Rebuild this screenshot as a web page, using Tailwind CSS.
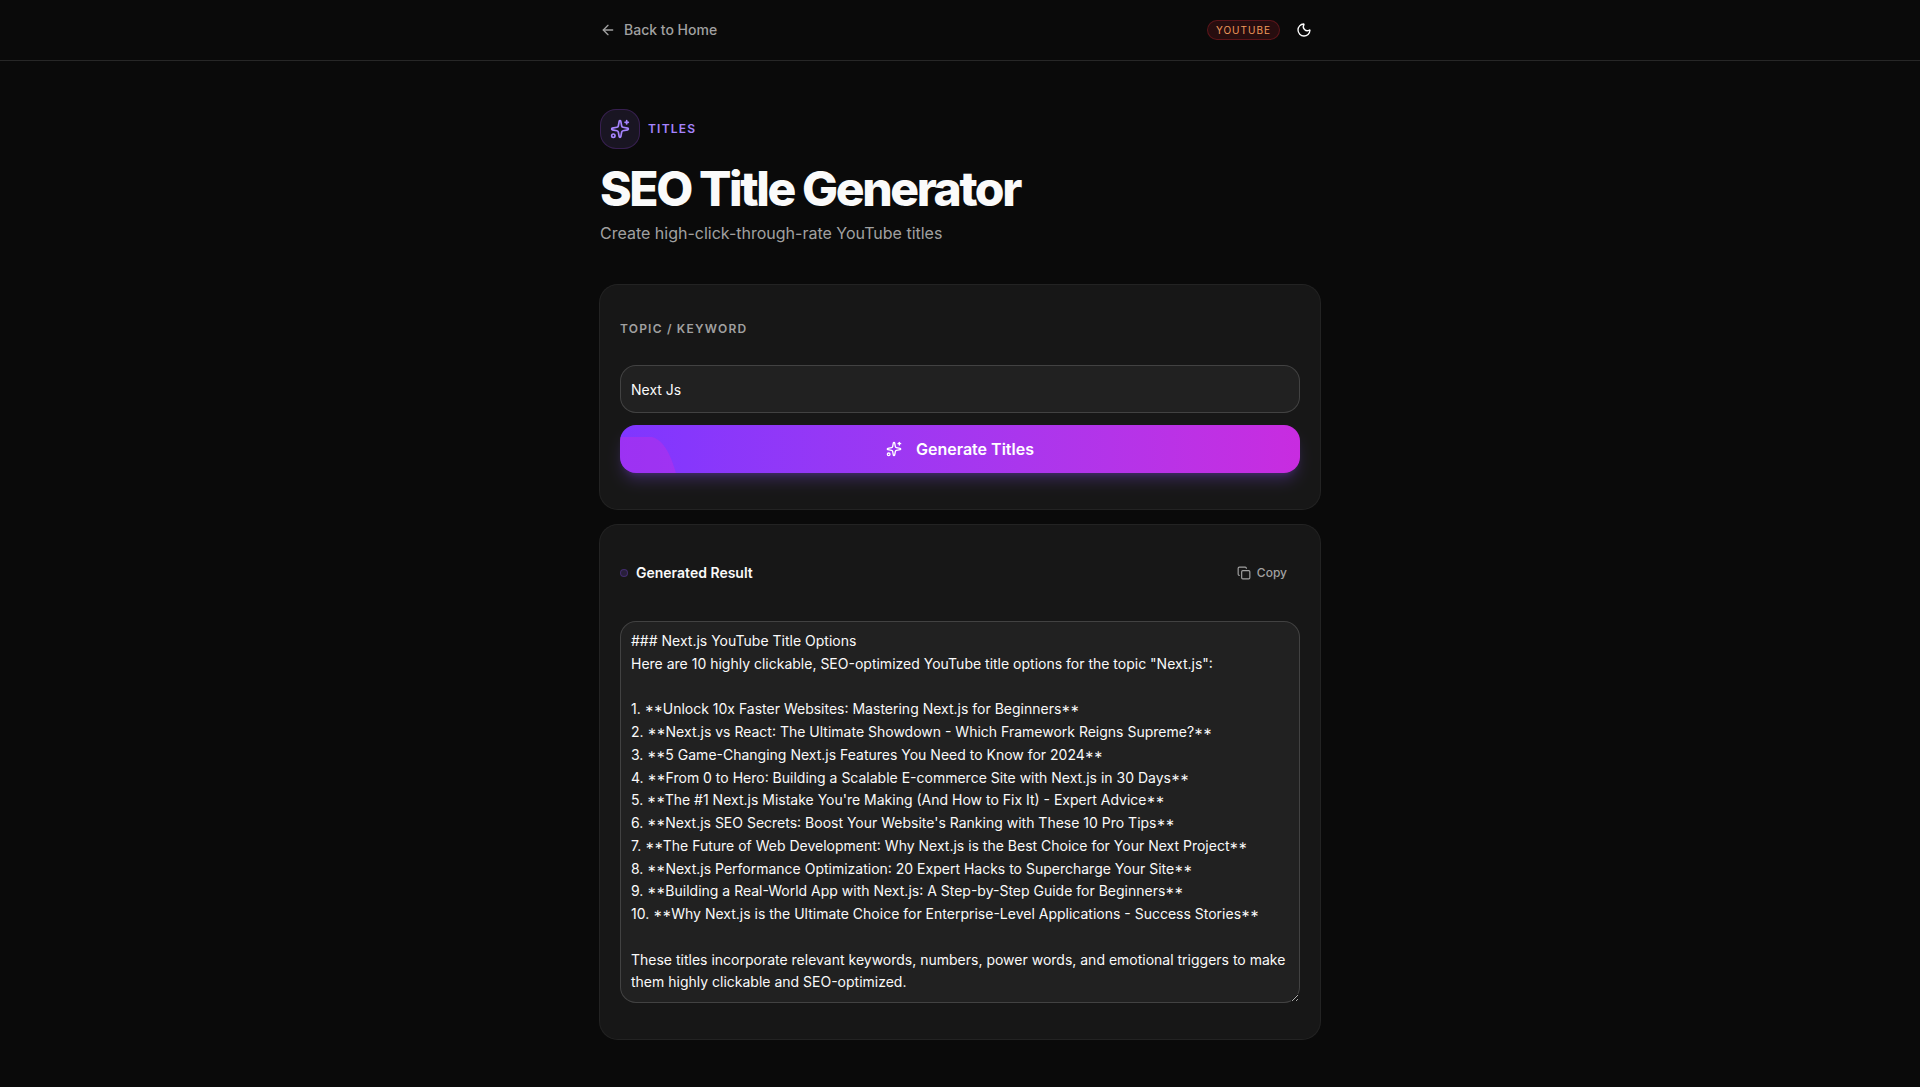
<!DOCTYPE html>
<html lang="en">
<head>
    <meta charset="UTF-8">
    <meta name="viewport" content="width=device-width, initial-scale=1.0">
    <title>SEO Title Generator</title>
    <script src="https://cdn.jsdelivr.net/npm/@tailwindcss/browser@4"></script>
</head>
<body class="min-h-screen bg-neutral-950 text-neutral-50 font-['Inter',sans-serif]">
    <header class="border-b border-white/12">
        <div class="max-w-[720px] mx-auto h-15 flex items-center justify-between">
            <a href="#" class="flex items-center gap-2 text-sm font-medium text-neutral-400 hover:text-white">
                <svg class="size-4" viewBox="0 0 24 24" fill="none" stroke="currentColor" stroke-width="2" stroke-linecap="round" stroke-linejoin="round"><path d="m12 19-7-7 7-7"/><path d="M19 12H5"/></svg>
                Back to Home
            </a>
            <div class="flex items-center gap-2">
                <span class="h-5 px-2 flex items-center rounded-full border border-red-500/25 bg-red-500/12 text-[10px] font-normal tracking-widest text-[#f09a5c]">YOUTUBE</span>
                <button type="button" aria-label="Toggle theme" class="size-8 flex items-center justify-center rounded-lg text-white hover:bg-white/10">
                    <svg class="size-4" viewBox="0 0 24 24" fill="none" stroke="currentColor" stroke-width="2" stroke-linecap="round" stroke-linejoin="round"><path d="M20.985 12.486a9 9 0 1 1-9.473-9.472c.405-.022.617.46.402.803a6 6 0 0 0 8.268 8.268c.344-.215.825-.004.803.401"/></svg>
                </button>
            </div>
        </div>
    </header>

    <main class="max-w-[720px] mx-auto py-12">
        <div class="mb-10">
            <div class="flex items-center gap-2 mb-4">
                <div class="size-10 flex items-center justify-center rounded-2xl border border-purple-500/20 bg-violet-400/10 text-violet-400">
                    <svg class="size-5" viewBox="0 0 24 24" fill="none" stroke="currentColor" stroke-width="2" stroke-linecap="round" stroke-linejoin="round"><path d="M11.017 2.814a1 1 0 0 1 1.966 0l1.051 5.558a2 2 0 0 0 1.594 1.594l5.558 1.051a1 1 0 0 1 0 1.966l-5.558 1.051a2 2 0 0 0-1.594 1.594l-1.051 5.558a1 1 0 0 1-1.966 0l-1.051-5.558a2 2 0 0 0-1.594-1.594l-5.558-1.051a1 1 0 0 1 0-1.966l5.558-1.051a2 2 0 0 0 1.594-1.594z"/><path d="M20 2v4"/><path d="M22 4h-4"/><circle cx="4" cy="20" r="2"/></svg>
                </div>
                <span class="text-xs font-semibold tracking-widest text-violet-400">TITLES</span>
            </div>
            <h1 class="text-5xl leading-none font-extrabold tracking-tighter mb-2">SEO Title Generator</h1>
            <p class="text-base text-neutral-400">Create high-click-through-rate YouTube titles</p>
        </div>

        <div class="space-y-4">
            <form class="rounded-[18px] bg-neutral-900 ring-1 ring-white/10 px-5 py-9">
                <label for="topic" class="block mb-7 text-xs font-semibold tracking-widest text-neutral-400">TOPIC / KEYWORD</label>
                <input id="topic" type="text" value="Next Js" class="block w-full h-12 mb-3 px-2.5 rounded-2xl border border-white/15 bg-[#212121] text-sm outline-none">
                <button type="button" class="relative overflow-hidden w-full h-12 flex items-center justify-center gap-3.5 rounded-2xl bg-linear-to-r from-[#7f36ff] to-[#c82ce0] text-base font-semibold text-white shadow-lg shadow-violet-500/25">
                    <svg class="absolute left-0 bottom-0 w-14 h-9 text-[#c82ce0]/40" viewBox="0 0 56 36" fill="currentColor"><path d="M0 0H32C40 2 45 9 49 17C52 23 54 30 56 36H0Z"/></svg>
                    <svg class="size-4" viewBox="0 0 24 24" fill="none" stroke="currentColor" stroke-width="2" stroke-linecap="round" stroke-linejoin="round"><path d="M11.017 2.814a1 1 0 0 1 1.966 0l1.051 5.558a2 2 0 0 0 1.594 1.594l5.558 1.051a1 1 0 0 1 0 1.966l-5.558 1.051a2 2 0 0 0-1.594 1.594l-1.051 5.558a1 1 0 0 1-1.966 0l-1.051-5.558a2 2 0 0 0-1.594-1.594l-5.558-1.051a1 1 0 0 1 0-1.966l5.558-1.051a2 2 0 0 0 1.594-1.594z"/><path d="M20 2v4"/><path d="M22 4h-4"/><circle cx="4" cy="20" r="2"/></svg>
                    Generate Titles
                </button>
            </form>

            <section class="rounded-[18px] bg-neutral-900 ring-1 ring-white/10 px-5 py-9">
                <div class="flex items-center justify-between mb-9">
                    <label for="result" class="flex items-center gap-2 text-sm font-semibold">
                        <span class="size-2 rounded-full border border-violet-500/25 bg-violet-500/15"></span>
                        Generated Result
                    </label>
                    <button type="button" class="h-6 px-3 flex items-center gap-1.5 rounded-lg border border-transparent text-xs font-medium text-neutral-400 hover:text-white">
                        <svg class="size-3.5" viewBox="0 0 24 24" fill="none" stroke="currentColor" stroke-width="2" stroke-linecap="round" stroke-linejoin="round"><rect width="14" height="14" x="8" y="8" rx="2" ry="2"/><path d="M4 16c-1.1 0-2-.9-2-2V4c0-1.1.9-2 2-2h10c1.1 0 2 .9 2 2"/></svg>
                        Copy
                    </button>
                </div>
                <textarea id="result" rows="16" spellcheck="false" class="block w-full px-2.5 py-2 rounded-2xl border border-white/15 bg-[#212121] text-sm leading-relaxed [font-feature-settings:'case'] outline-none resize-y">### Next.js YouTube Title Options
Here are 10 highly clickable, SEO-optimized YouTube title options for the topic "Next.js":

1. **Unlock 10x Faster Websites: Mastering Next.js for Beginners**
2. **Next.js vs React: The Ultimate Showdown - Which Framework Reigns Supreme?**
3. **5 Game-Changing Next.js Features You Need to Know for 2024**
4. **From 0 to Hero: Building a Scalable E-commerce Site with Next.js in 30 Days**
5. **The #1 Next.js Mistake You're Making (And How to Fix It) - Expert Advice**
6. **Next.js SEO Secrets: Boost Your Website's Ranking with These 10 Pro Tips**
7. **The Future of Web Development: Why Next.js is the Best Choice for Your Next Project**
8. **Next.js Performance Optimization: 20 Expert Hacks to Supercharge Your Site**
9. **Building a Real-World App with Next.js: A Step-by-Step Guide for Beginners**
10. **Why Next.js is the Ultimate Choice for Enterprise-Level Applications - Success Stories**

These titles incorporate relevant keywords, numbers, power words, and emotional triggers to make them highly clickable and SEO-optimized.</textarea>
            </section>
        </div>
    </main>
</body>
</html>
